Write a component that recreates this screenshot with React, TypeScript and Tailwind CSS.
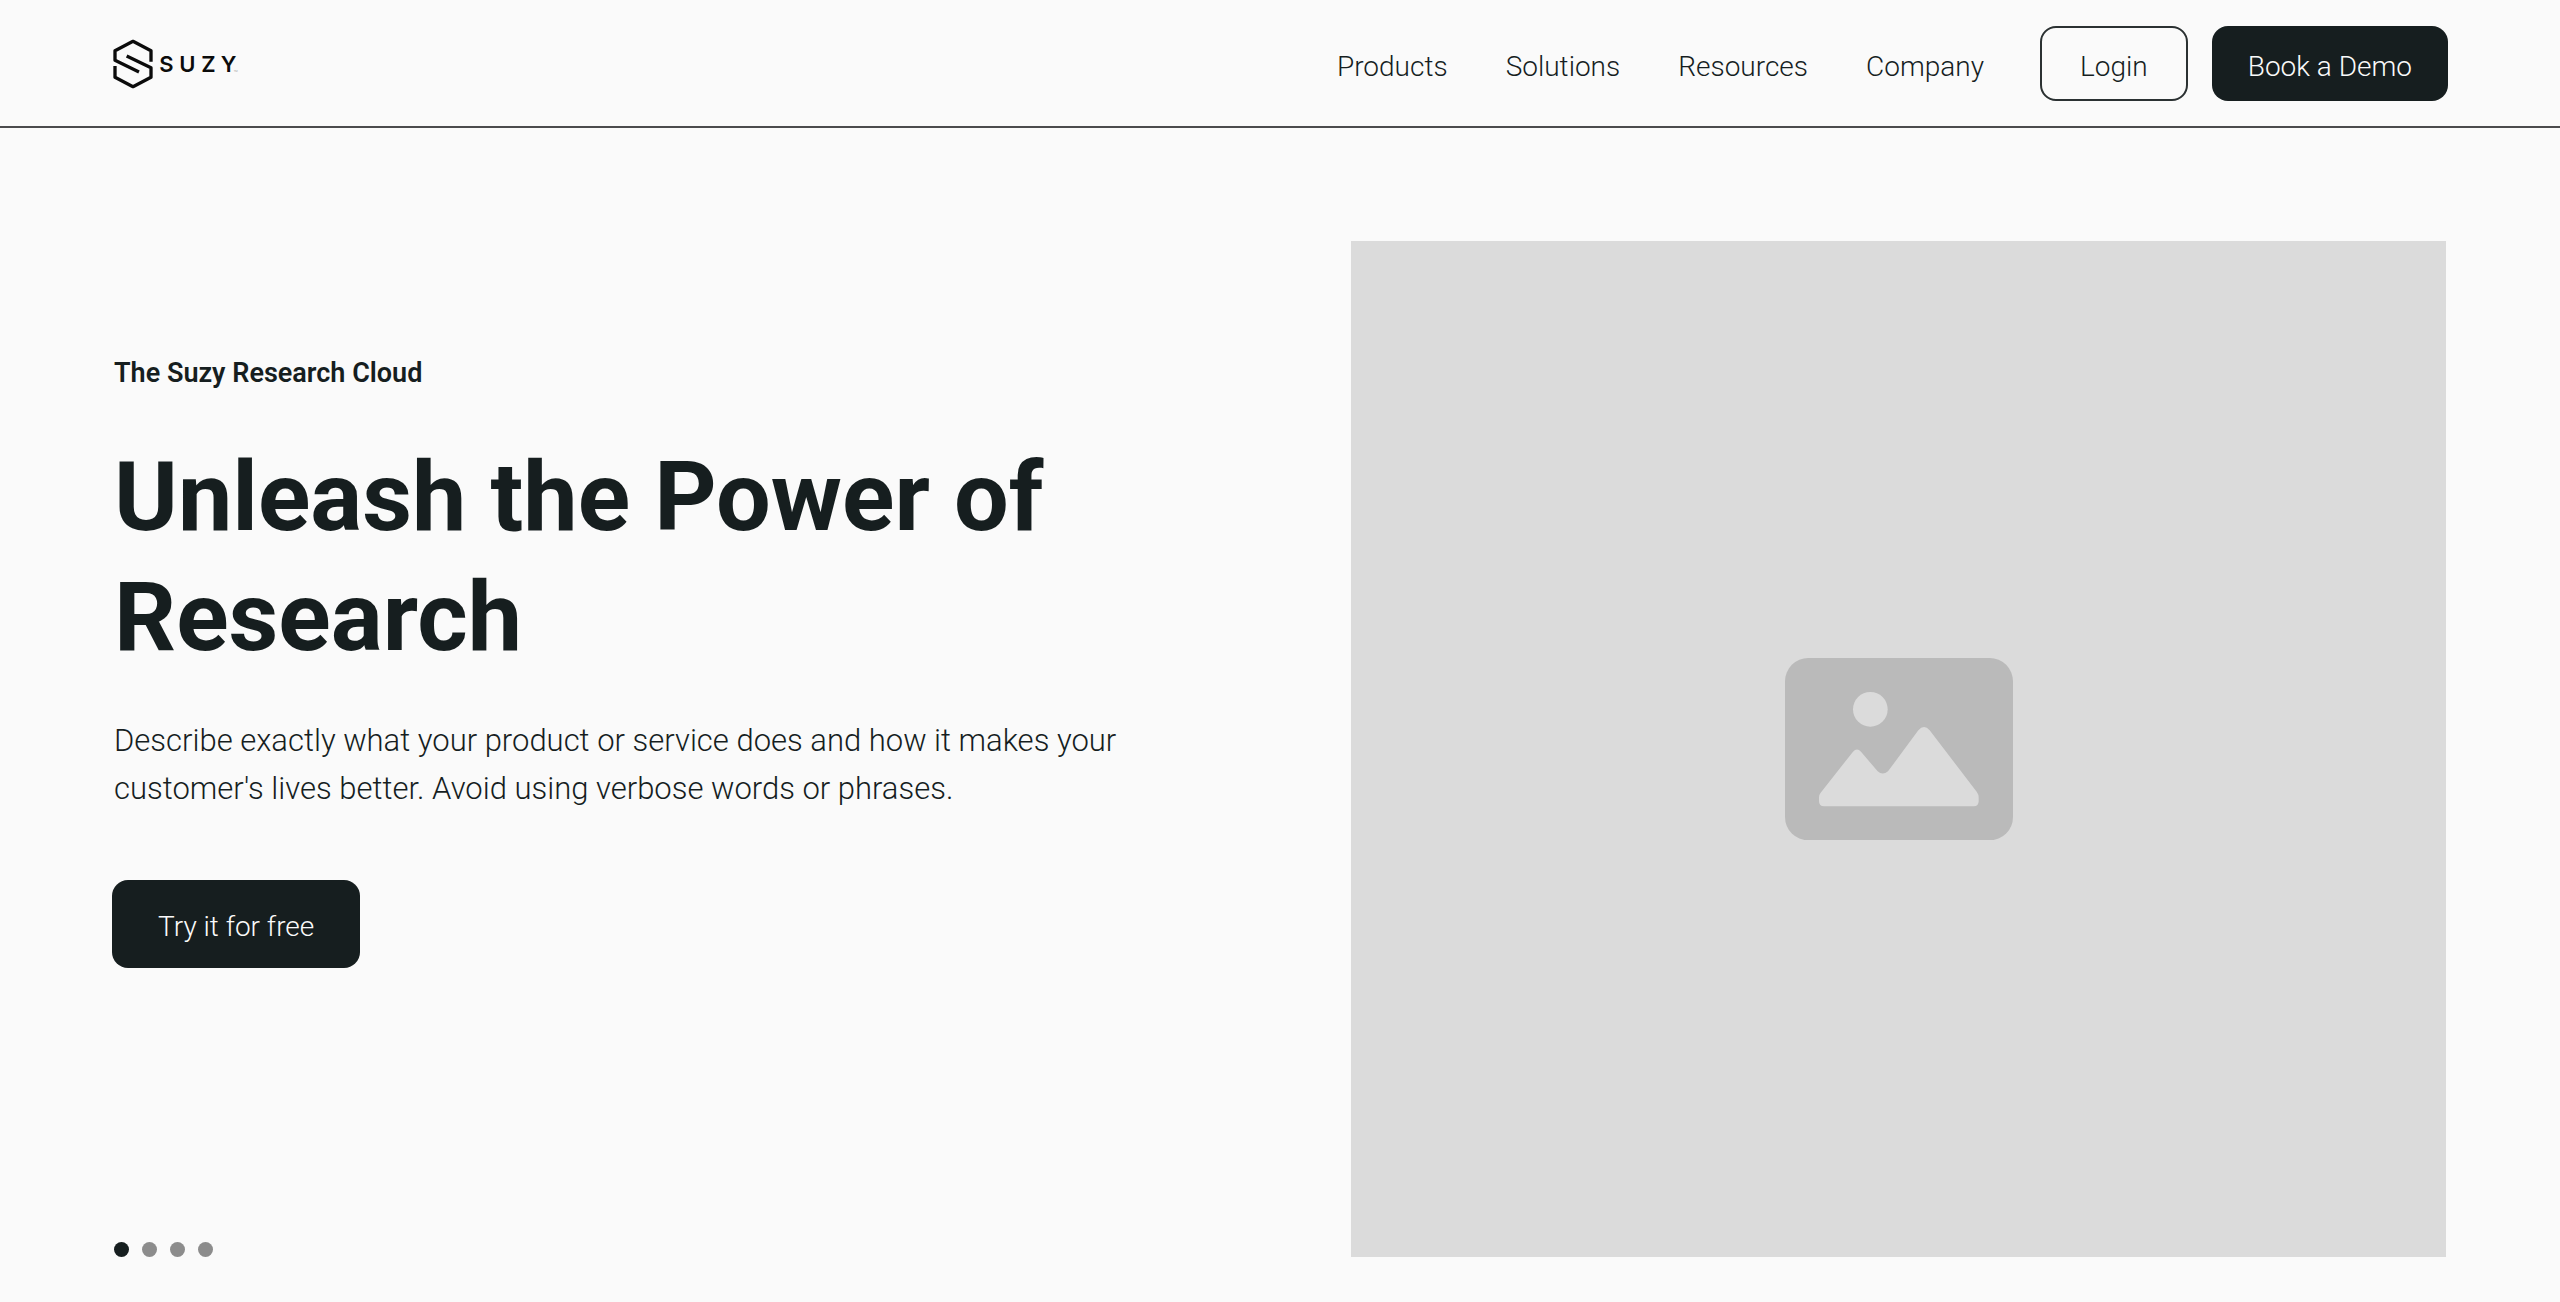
import { useState } from "react";

const navLinks = ["Products", "Solutions", "Resources", "Company"];

const slides = [1, 2, 3, 4];

function Logo() {
  return (
    <svg
      viewBox="66 54 384 156"
      className="w-32 h-[52px]"
      role="img"
      aria-label="Suzy"
    >
      <g fill="none" stroke="#0b0b0b" strokeWidth="10" strokeLinejoin="round">
        <path d="M183 125V92L129 64L75 92V121L147 156" />
        <path d="M75 138V172L129 200L183 172V143L110 108" />
      </g>
      <text
        x="208 268 334 392"
        y="156"
        fontSize="66"
        fontWeight="600"
        fill="#0b0b0b"
        className="font-['Inter',sans-serif]"
      >
        SUZY
      </text>
      <text
        x="431"
        y="156"
        fontSize="8"
        fill="#9a9a9a"
        className="font-['Inter',sans-serif]"
      >
        TM
      </text>
    </svg>
  );
}

function ImagePlaceholder() {
  return (
    <div className="flex items-center justify-center w-full aspect-[1095/1016] bg-[#dbdbdb]">
      <svg viewBox="75 56 684 547" className="w-[228px]" aria-hidden="true">
        <rect x="75" y="56" width="684" height="547" rx="70" fill="#bababa" />
        <circle cx="331" cy="210" r="52" fill="#dbdbdb" />
        <path
          d="M177 474Q177 466 182 460L279 337Q291 324 303 337L353 396Q368 409 384 396L475 273Q492 253 509 273L650 457Q656 465 656 474V486Q656 501 641 501H192Q177 501 177 486Z"
          fill="#dbdbdb"
        />
      </svg>
    </div>
  );
}

export default function App() {
  const [activeSlide, setActiveSlide] = useState<number>(1);

  return (
    <div className="min-h-screen bg-[#fafafa] text-[#161e1f] font-['Roboto',sans-serif]">
      <header className="flex items-center justify-between px-28 pt-[26px] pb-[25px] border-b-2 border-[#4b4b4d]">
        <a href="#">
          <Logo />
        </a>
        <div className="flex items-center gap-14">
          <nav className="flex items-center gap-[58px] pt-1.5">
            {navLinks.map((link) => (
              <a
                key={link}
                href="#"
                className="text-[28px] leading-[40px] font-light"
              >
                {link}
              </a>
            ))}
          </nav>
          <div className="flex items-center gap-6">
            <button className="h-[75px] px-[38px] pt-1.5 rounded-2xl border-2 border-[#2b3132] text-[28px] leading-[40px] font-light">
              Login
            </button>
            <button className="h-[75px] px-9 pt-1.5 rounded-2xl bg-[#161e1f] text-[#fafafa] text-[28px] leading-[40px] font-light">
              Book a Demo
            </button>
          </div>
        </div>
      </header>

      <main className="grid grid-cols-2 gap-36 pl-28 pr-[114px] pt-[113px] pb-11">
        <div className="flex flex-col justify-between">
          <div className="flex flex-col items-start pt-28">
            <div className="pl-0.5">
              <p className="text-[27px] leading-[40px] font-semibold">
                The Suzy Research Cloud
              </p>
              <h1 className="pt-11 text-[97px] leading-[120px] font-bold">
                Unleash the Power of Research
              </h1>
              <p className="pt-10 text-[31px] leading-[48px] font-light">
                Describe exactly what your product or service does and how it
                makes your customer's lives better. Avoid using verbose words or
                phrases.
              </p>
            </div>
            <button className="h-[88px] mt-[67px] px-[46px] pt-1.5 rounded-2xl bg-[#161e1f] text-[#fafafa] text-[28px] leading-[40px] font-light">
              Try it for free
            </button>
          </div>
          <div className="flex gap-[13px] pl-0.5">
            {slides.map((slide) => (
              <button
                key={slide}
                aria-label={`Slide ${slide}`}
                onClick={() => setActiveSlide(slide)}
                className={`size-[15px] rounded-full ${
                  slide === activeSlide ? "bg-[#161e1f]" : "bg-[#8c8c8c]"
                }`}
              />
            ))}
          </div>
        </div>
        <ImagePlaceholder />
      </main>
    </div>
  );
}
